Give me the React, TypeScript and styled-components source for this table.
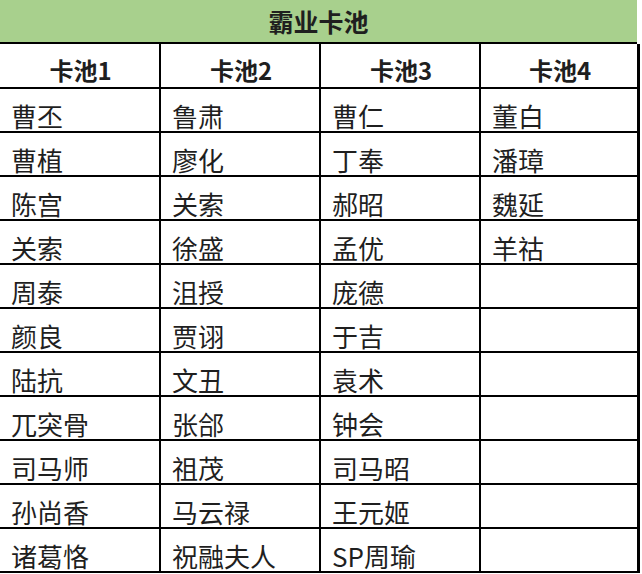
import * as React from "react"
import styled, { createGlobalStyle } from "styled-components"

const GlobalStyle = createGlobalStyle`
  html, body {
    margin: 0;
    padding: 0;
    background: #ffffff;
  }
  body {
    font-family: "Noto Sans CJK SC", "Noto Sans", sans-serif;
    color: #1f1f1f;
  }
`

const Sheet = styled.div`
  width: 640px;
  display: grid;
  grid-template-columns: 161px 160px 160px 159px;
`

const Title = styled.div`
  grid-column: 1 / span 4;
  height: 44px;
  box-sizing: border-box;
  width: 637px;
  background: #a8d08d;
  border-bottom: 2px solid #000;
  display: flex;
  align-items: center;
  justify-content: center;
  font-size: 25px;
  font-weight: 700;
  line-height: 1;
  padding-top: 1px;
`

const Cell = styled.div<{ $last?: boolean; $head?: boolean }>`
  box-sizing: border-box;
  height: ${(p) => (p.$head ? 45 : 44)}px;
  border-right: ${(p) => (p.$last ? 3 : 2)}px solid #000;
  border-bottom: 2px solid #000;
  display: flex;
  align-items: flex-start;
  justify-content: ${(p) => (p.$head ? "center" : "flex-start")};
  padding: ${(p) => (p.$head ? "14px 0 0 2px" : "14px 0 0 11px")};
  font-size: ${(p) => (p.$head ? 24 : 26)}px;
  font-weight: ${(p) => (p.$head ? 700 : 400)};
  line-height: 1;
  white-space: nowrap;
`

const heads = ["卡池1", "卡池2", "卡池3", "卡池4"]

const pools = [
  ["曹丕", "曹植", "陈宫", "关索", "周泰", "颜良", "陆抗", "兀突骨", "司马师", "孙尚香", "诸葛恪"],
  ["鲁肃", "廖化", "关索", "徐盛", "沮授", "贾诩", "文丑", "张郃", "祖茂", "马云禄", "祝融夫人"],
  ["曹仁", "丁奉", "郝昭", "孟优", "庞德", "于吉", "袁术", "钟会", "司马昭", "王元姬", "SP周瑜"],
  ["董白", "潘璋", "魏延", "羊祜"],
]

const App = () => {
  const rows = Array.from({ length: 11 }, (_, r) => pools.map((col) => col[r] ?? ""))

  return (
    <>
      <GlobalStyle />
      <Sheet>
        <Title>霸业卡池</Title>
        {heads.map((h, i) => (
          <Cell key={h} $head $last={i === 3}>
            {h}
          </Cell>
        ))}
        {rows.map((row, r) =>
          row.map((name, c) => (
            <Cell key={`${r}-${c}`} $last={c === 3}>
              {name}
            </Cell>
          ))
        )}
      </Sheet>
    </>
  )
}

export default App
